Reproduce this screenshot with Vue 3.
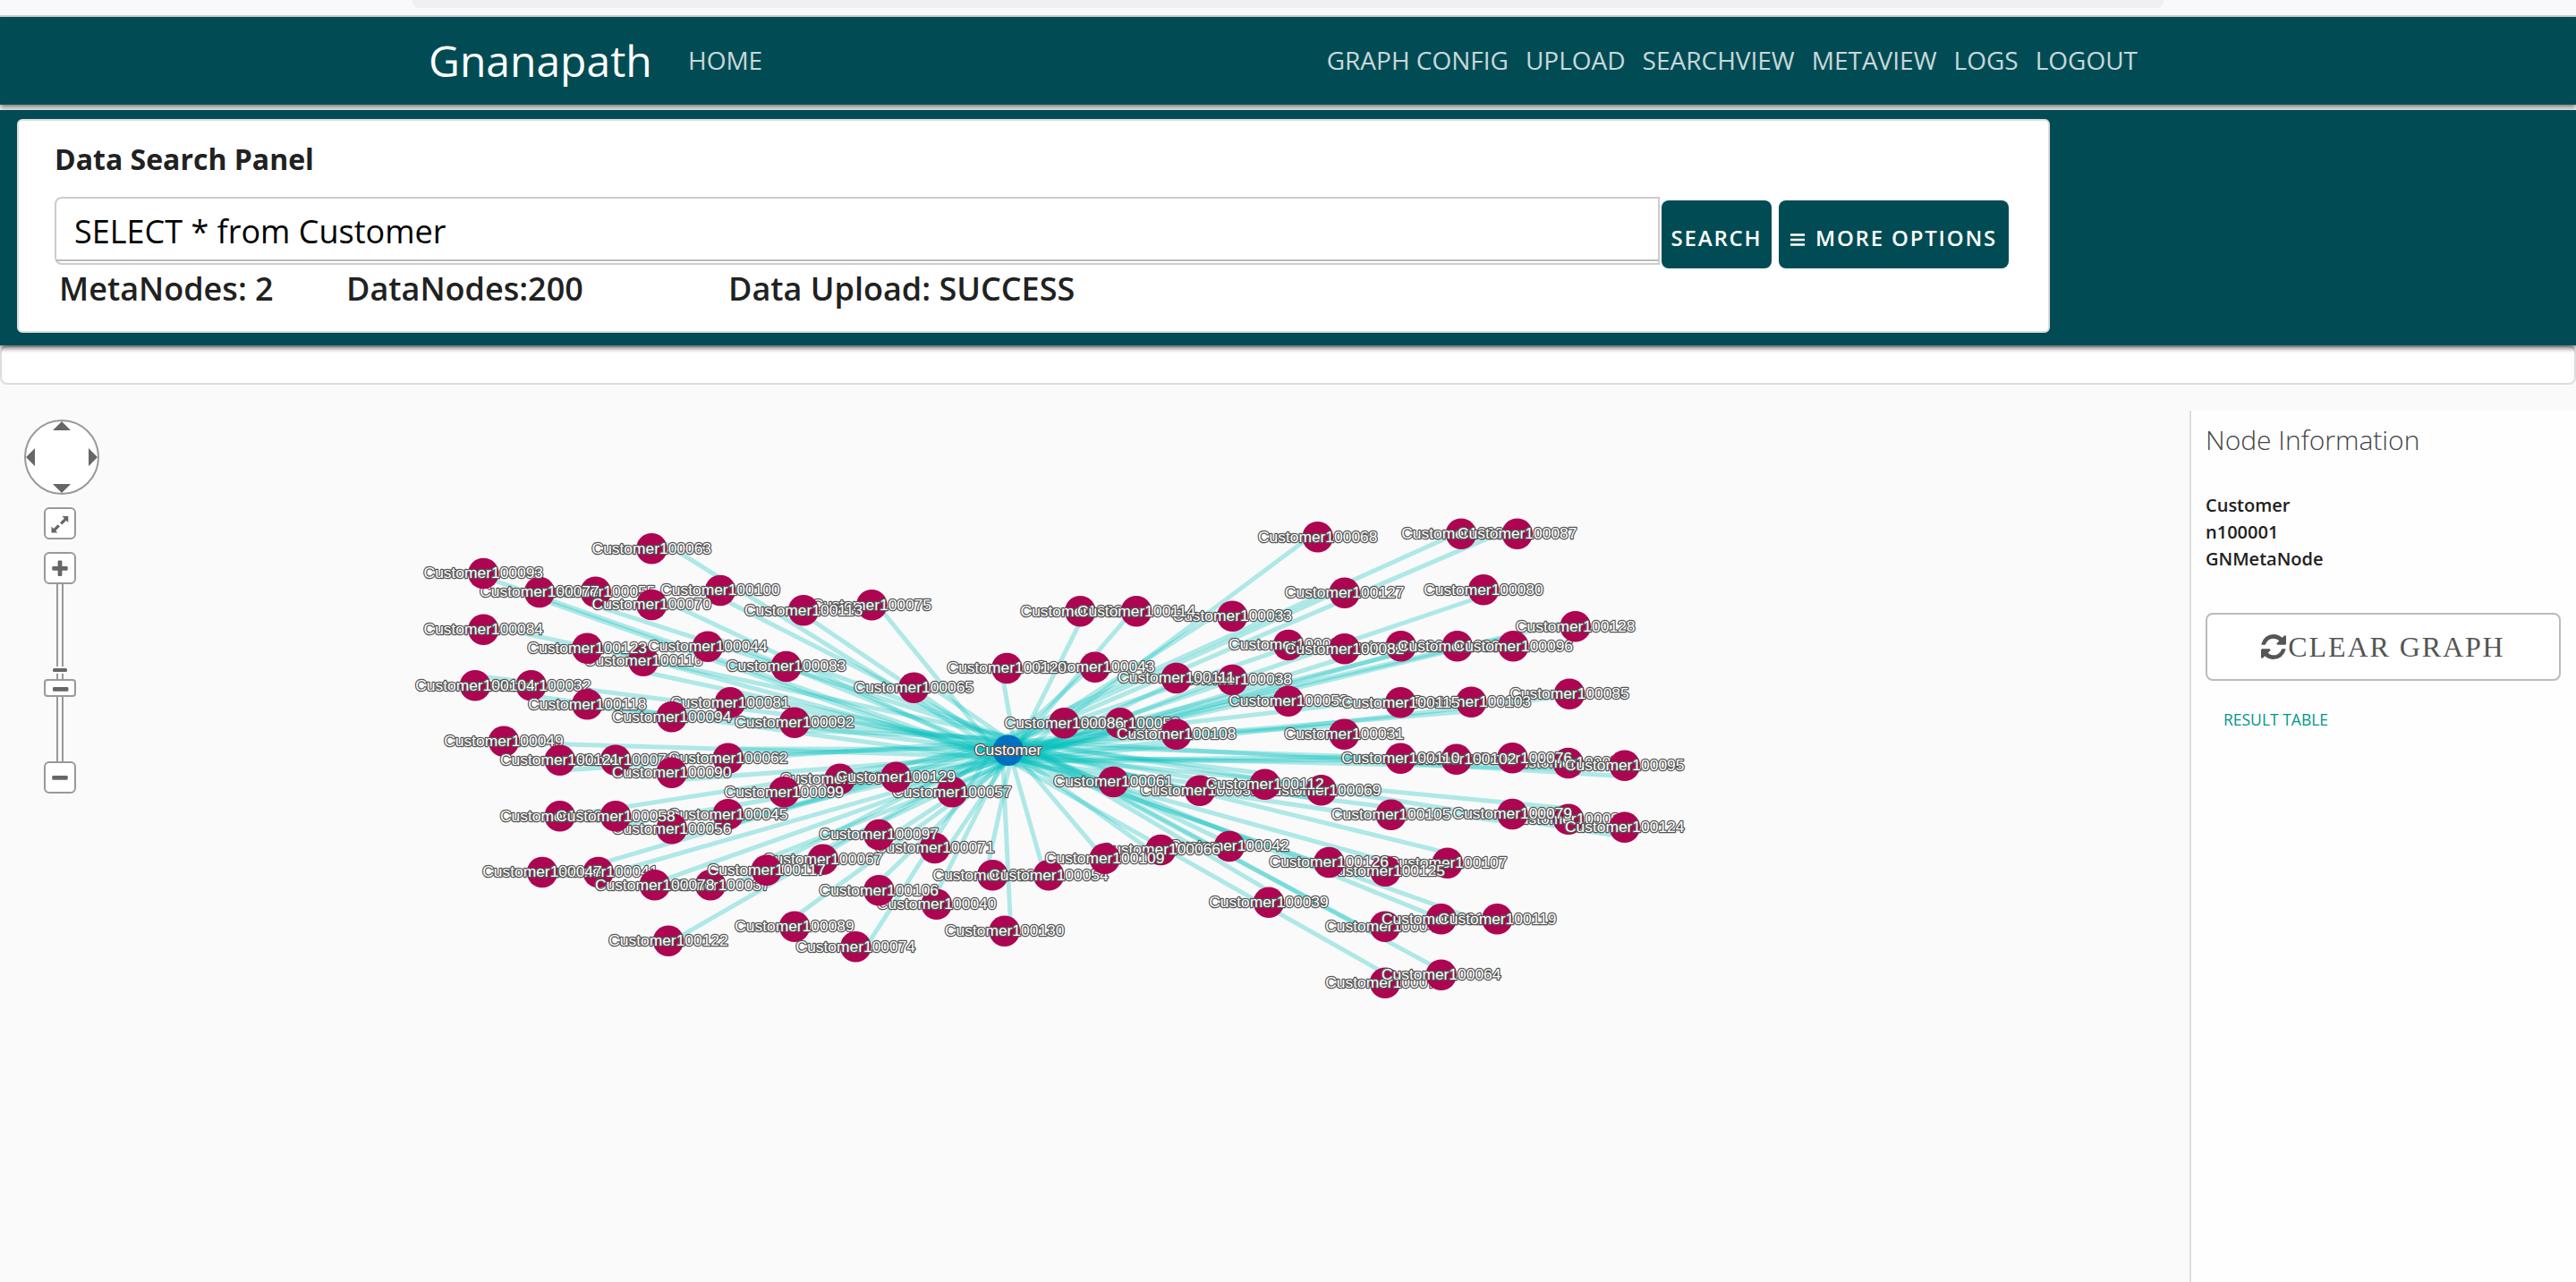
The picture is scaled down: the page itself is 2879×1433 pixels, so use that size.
<script setup>
const navLinks = ['GRAPH CONFIG', 'UPLOAD', 'SEARCHVIEW', 'METAVIEW', 'LOGS', 'LOGOUT']
const info = ['Customer', 'n100001', 'GNMetaNode']

const hub = { x: 1126.7, y: 838.7 }

// [id, x, y, optional two points the edge runs through], back to front
const raw = [
  [55, 665.7, 661.7, [680, 681.7, 776.7, 713]],
  [77, 603, 662, [618, 675, 726.7, 715]],
  [93, 540.3, 641],
  [63, 728.3, 613.3, [760, 618, 800, 643]],
  [100, 805, 660],
  [70, 728.3, 676],
  [84, 540.3, 703.7, [598, 710, 638, 718]],
  [116, 719, 738.7],
  [123, 656.3, 724.7],
  [44, 791, 722.7],
  [32, 593.7, 766.3],
  [104, 531, 766.3],
  [118, 656.3, 787.3],
  [81, 816, 785.3],
  [94, 750.7, 801.3],
  [75, 974.3, 676.3, [990, 688, 1086.7, 806.7]],
  [113, 898, 682.3],
  [83, 878.7, 745],
  [65, 1021.3, 768.7],
  [92, 888, 807.7],
  [49, 563, 828.7, [630, 832, 796.7, 836.7]],
  [72, 688, 849.7],
  [121, 625.7, 849.7],
  [62, 813.7, 847.7],
  [90, 750.7, 863.7],
  [60, 625.7, 912.3, [700, 901.7, 806.7, 885]],
  [45, 813.7, 910.3],
  [56, 750.7, 926.3],
  [58, 688, 912.3],
  [41, 668.7, 975, [710, 968, 850, 928]],
  [47, 606, 975, [683, 961.7, 740, 945]],
  [37, 794, 989.3],
  [78, 731.7, 989.3, [746.7, 981.7, 850, 945]],
  [122, 747, 1051.7, [763, 1045, 850, 995]],
  [98, 938.7, 870.7],
  [57, 1064, 885.3],
  [129, 1001.3, 868.7],
  [99, 876.3, 885.3],
  [71, 1044.7, 948],
  [97, 982.3, 933],
  [67, 919.7, 960.7],
  [117, 856.7, 972.7],
  [40, 1046.7, 1010.7, [1050, 991.7, 1116.7, 860]],
  [106, 982.3, 995.3],
  [59, 1109.3, 978.3, [1105.7, 960, 1128, 856.7]],
  [54, 1172, 978.3, [1163, 961.7, 1133, 856.7]],
  [89, 888, 1035.7, [895, 1020, 966.7, 968]],
  [74, 956.3, 1058.3, [973, 1050, 1026.7, 963]],
  [130, 1122.7, 1040.7, [1129, 1024, 1121, 856]],
  [36, 1207.3, 683.3, [1205, 700, 1153.3, 803]],
  [33, 1377.3, 688.7],
  [114, 1270, 683.3, [1253, 698, 1160, 806.7]],
  [43, 1223.7, 745.7],
  [120, 1125.3, 747, [1121.7, 763, 1131.7, 820]],
  [38, 1377.3, 760],
  [111, 1314.7, 758],
  [34, 1440, 721],
  [52, 1440, 783.7],
  [53, 1252, 808.3],
  [86, 1189.3, 808.3],
  [108, 1314.7, 820.7],
  [51, 1341, 883.7],
  [61, 1244.3, 874],
  [69, 1476.7, 883.3],
  [112, 1413.7, 876.7],
  [42, 1374, 946],
  [66, 1297.3, 950],
  [109, 1234.7, 959.7, [1221.7, 945, 1146.7, 856.7]],
  [39, 1418, 1008.7],
  [68, 1472.7, 600.3, [1455, 606.7, 1380, 662.7]],
  [88, 1633, 596.7, [1613, 603, 1513, 648]],
  [87, 1695.7, 596.7, [1660, 603, 1523, 661.7]],
  [127, 1502.7, 662.7],
  [80, 1658, 659.3, [1646.7, 670, 1513, 715]],
  [35, 1565.7, 722.3],
  [82, 1502.7, 725.3],
  [46, 1628.7, 722.3],
  [96, 1691.3, 722.3],
  [128, 1760.7, 700.3],
  [85, 1754, 775.7],
  [103, 1644.3, 784.7],
  [115, 1565.3, 785.3],
  [31, 1502.3, 820.7],
  [50, 1752.7, 853],
  [76, 1690.3, 847.3],
  [102, 1627.7, 848.7],
  [110, 1565.3, 847.7],
  [95, 1815.7, 855.7],
  [105, 1554.7, 910.7],
  [91, 1753, 915.7],
  [79, 1690.3, 910],
  [124, 1815.7, 924.7],
  [107, 1617.7, 964.7],
  [125, 1548.3, 973.7],
  [126, 1485.3, 964],
  [48, 1548, 1035.7],
  [101, 1610.7, 1027.3],
  [119, 1673.3, 1027.3],
  [73, 1548, 1098.7, [1536.7, 1081.7, 1433, 1023]],
  [64, 1610.7, 1089.7, [1596.7, 1077, 1556.7, 1055]],
]

const nodes = raw.map(([id, x, y]) => ({ x, y, label: 'Customer' + (100000 + id) }))

// nearest point to c on the line through a and b, kept within 15px of c
function project(c, a, b) {
  const dx = b.x - a.x
  const dy = b.y - a.y
  const t = ((c.x - a.x) * dx + (c.y - a.y) * dy) / (dx * dx + dy * dy)
  const px = a.x + dx * t - c.x
  const py = a.y + dy * t - c.y
  const d = Math.hypot(px, py)
  const k = d > 15 ? 15 / d : 1
  return { x: c.x + px * k, y: c.y + py * k }
}

const edges = raw.map(([id, x, y, via]) => {
  let s
  let t
  if (via) {
    const a = { x: via[0], y: via[1] }
    const b = { x: via[2], y: via[3] }
    s = project({ x, y }, a, b)
    t = project(hub, a, b)
  } else {
    const u = id * 2.399
    const v = id * 4.137 + 1
    s = { x: x + 12 * Math.cos(u), y: y + 12 * Math.sin(u) }
    t = { x: hub.x + 13 * Math.cos(v), y: hub.y + 13 * Math.sin(v) }
  }
  return { x1: s.x, y1: s.y, x2: t.x, y2: t.y }
})
</script>

<template>
  <div class="page">
    <div class="chrome"><div class="urlbar"></div></div>
    <nav class="navbar">
      <span class="brand">Gnanapath</span>
      <span class="link">HOME</span>
      <div class="links">
        <span v-for="l in navLinks" :key="l" class="link">{{ l }}</span>
      </div>
    </nav>
    <section class="search">
      <div class="card">
        <h1 class="title">Data Search Panel</h1>
        <div class="row">
          <div class="input"><div class="inner">SELECT * from Customer</div></div>
          <button class="btn b1">SEARCH</button>
          <button class="btn b2">
            <svg width="16" height="14" viewBox="0 0 16 14"><path d="M0 1.5h16M0 7h16M0 12.5h16" stroke="#fff" stroke-width="2.6" /></svg>
            <span>MORE OPTIONS</span>
          </button>
        </div>
        <div class="stats">
          <span class="s1">MetaNodes: 2</span>
          <span class="s2">DataNodes:200</span>
          <span class="s3">Data Upload: SUCCESS</span>
        </div>
      </div>
    </section>
    <div class="strip"></div>
    <main class="body">
      <svg class="graph" width="2447" height="974" viewBox="0 459 2447 974">
        <g class="edges">
          <line v-for="(e, i) in edges" :key="i" :x1="e.x1" :y1="e.y1" :x2="e.x2" :y2="e.y2" />
        </g>
        <g class="nodes">
          <g v-for="n in nodes" :key="n.label">
            <circle :cx="n.x" :cy="n.y" r="17.3" fill="#ad0551" />
            <text :x="n.x" :y="n.y + 5.3">{{ n.label }}</text>
          </g>
          <circle :cx="hub.x" :cy="hub.y" r="17.3" fill="#0070c0" />
          <text :x="hub.x" :y="hub.y + 5.3">Customer</text>
        </g>
        <g class="ctl">
          <circle cx="69" cy="511" r="41" />
          <path class="solid" d="M69 471l10 10h-20zM69 551l10-10h-20zM29 511l10-10v20zM109 511l-10-10v20z" />
          <path class="rail" d="M64 652v200M70 652v200" />
          <rect class="tickbg" x="57" y="745" width="20" height="8" />
          <rect class="solid" x="59" y="747" width="16" height="4" rx="1.5" />
          <rect x="50" y="568" width="34" height="34" rx="5" />
          <rect x="50" y="618" width="34" height="34" rx="5" />
          <rect x="50" y="760" width="34" height="18" rx="3" />
          <rect x="50" y="852" width="34" height="34" rx="5" />
          <path class="solid" d="M69.5 577H76.3V584L74 581.8L69.3 586.5L67 584.2L71.8 579.5ZM57.5 588.5L60 591L64.6 586.2L67 588.6L62.2 593.2L64.4 595.5H57.5Z" />
          <rect class="solid" x="58.3" y="633" width="17.4" height="4.8" rx="1.2" />
          <rect class="solid" x="64.6" y="626.6" width="4.8" height="17.4" rx="1.2" />
          <rect class="solid" x="59" y="768" width="17.4" height="4.8" rx="1.2" />
          <rect class="solid" x="58.3" y="867" width="17.4" height="4.8" rx="1.2" />
        </g>
      </svg>
      <aside class="side">
        <h2>Node Information</h2>
        <ul>
          <li v-for="t in info" :key="t">{{ t }}</li>
        </ul>
        <button class="clear">
          <svg width="28" height="28" viewBox="0 0 1536 1536"><path fill="#555" d="M1511 928q0 5-1 7-64 268-268 434.500T764 1536q-146 0-282.500-55T238 1324l-129 129q-19 19-45 19t-45-19-19-45V960q0-26 19-45t45-19h448q26 0 45 19t19 45-19 45l-137 137q71 66 161 102t187 36q134 0 250-65t186-179q11-17 53-117 8-23 30-23h192q13 0 22.500 9.500t9.500 22.500zm25-800v448q0 26-19 45t-45 19h-448q-26 0-45-19t-19-45 19-45l138-138Q969 256 768 256q-134 0-250 65T332 500q-11 17-53 117-8 23-30 23H50q-13 0-22.500-9.500T18 608v-7q65-268 270-434.500T768 0q146 0 284 55.500T1297 212l130-129q19-19 45-19t45 19 19 45z" /></svg>
          <span>CLEAR GRAPH</span>
        </button>
        <a class="result">RESULT TABLE</a>
      </aside>
    </main>
  </div>
</template>

<style>
body {
  margin: 0;
  background: #fafafa;
  overflow: hidden;
}
</style>

<style scoped>
.page {
  width: 2879px;
  height: 1433px;
  display: flex;
  flex-direction: column;
  font-family: 'Open Sans', 'Noto Sans', sans-serif;
  color: #212121;
  background: #fafafa;
  overflow: hidden;
  white-space: nowrap;
}
.chrome {
  height: 17px;
  background: #f9f9fb;
  border-bottom: 2px solid #ccc;
}
.urlbar {
  margin-left: 461px;
  width: 1957px;
  height: 9px;
  background: #f0f0f4;
  border-radius: 0 0 8px 8px;
}
.navbar {
  height: 98px;
  background: #014c54;
  display: flex;
  align-items: center;
  box-sizing: border-box;
  padding: 0 490px 2px 479px;
  box-shadow: 0 3px 5px rgba(0, 0, 0, 0.5);
}
.brand {
  font-size: 48px;
  line-height: 97px;
  color: #fff;
  width: 290px;
}
.link {
  font-size: 28px;
  color: rgba(255, 255, 255, 0.8);
  line-height: 95px;
}
.links {
  margin-left: auto;
  display: flex;
  gap: 19px;
}
.search {
  margin-top: 6px;
  height: 263px;
  box-sizing: border-box;
  padding: 10px 19px;
  background: #014c54;
  box-shadow: 0 3px 6px rgba(0, 0, 0, 0.6);
  position: relative;
}
.card {
  width: 2272px;
  height: 239px;
  box-sizing: border-box;
  border: 2px solid #ddd;
  border-radius: 6px;
  background: #fff;
  padding: 23px 0 0 40px;
}
.title {
  margin: 0;
  font-size: 32px;
  line-height: 40px;
  font-weight: 700;
}
.row {
  display: flex;
  margin-top: 22px;
  height: 76px;
}
.input {
  width: 1794px;
  height: 76px;
  box-sizing: border-box;
  border: 2px solid #ccc;
  border-radius: 8px 0 0 8px;
}
.inner {
  height: 68px;
  line-height: 73px;
  border-bottom: 2px solid #bbb;
  padding-left: 20px;
  font-size: 36px;
  color: #000;
}
.btn {
  margin: 4px 0 0 2px;
  height: 76px;
  padding: 7px 0 0;
  border: 0;
  border-radius: 8px;
  background: #014c54;
  color: #fff;
  font: 650 24px 'Open Sans', sans-serif;
  letter-spacing: 1.8px;
  flex: none;
}
.b1 {
  width: 123px;
}
.b2 {
  width: 257px;
  margin-left: 8px;
  display: flex;
  align-items: center;
  justify-content: center;
  gap: 12px;
}
.b2 svg {
  margin-top: 4px;
}
.stats {
  display: flex;
  padding-left: 5px;
  font-size: 36px;
  font-weight: 600;
  line-height: 53px;
}
.s1 {
  width: 321px;
}
.s2 {
  width: 427px;
}
.strip {
  height: 44px;
  box-sizing: border-box;
  border: 2px solid #ddd;
  border-radius: 8px;
  background: #fff;
}
.body {
  margin-top: 29px;
  height: 974px;
  display: flex;
}
.graph {
  display: block;
  flex: none;
}
.edges line {
  stroke: #00bfbd;
  stroke-opacity: 0.3;
  stroke-width: 5;
}
.nodes text {
  font-family: 'Liberation Sans', sans-serif;
  font-size: 17.4px;
  text-anchor: middle;
  fill: #fff;
  stroke: #555;
  stroke-width: 2.5px;
  stroke-linejoin: round;
  paint-order: stroke;
}
.ctl circle,
.ctl rect {
  fill: #fff;
  stroke: #999;
  stroke-width: 2;
}
.ctl .solid {
  fill: #666;
  stroke: none;
}
.ctl .tickbg {
  fill: #fafafa;
  stroke: none;
}
.ctl .rail {
  fill: none;
  stroke: #999;
  stroke-width: 2;
}
.side {
  flex: 1;
  box-sizing: border-box;
  border-left: 2px solid #ddd;
  background: #fefefe;
  padding: 13px 17px 0 16px;
}
.side h2 {
  margin: 0;
  font-size: 30px;
  font-weight: 300;
  line-height: 40px;
  color: #444;
}
.side ul {
  list-style: none;
  margin: 38px 0 0;
  padding: 0;
}
.side li {
  font-size: 20px;
  font-weight: 600;
  line-height: 30px;
}
.clear {
  margin-top: 45px;
  width: 397px;
  height: 76px;
  box-sizing: border-box;
  border: 2px solid #bbb;
  border-radius: 8px;
  background: #fff;
  display: flex;
  align-items: center;
  justify-content: center;
  gap: 2px;
  color: #555;
  font: 32px 'Liberation Serif', serif;
  letter-spacing: 1.9px;
  padding: 0;
}
.clear span {
  padding-top: 1px;
}
.result {
  display: block;
  margin: 28px 0 0 20px;
  font-size: 17.5px;
  line-height: 30px;
  font-weight: 500;
  color: #009688;
}
</style>
